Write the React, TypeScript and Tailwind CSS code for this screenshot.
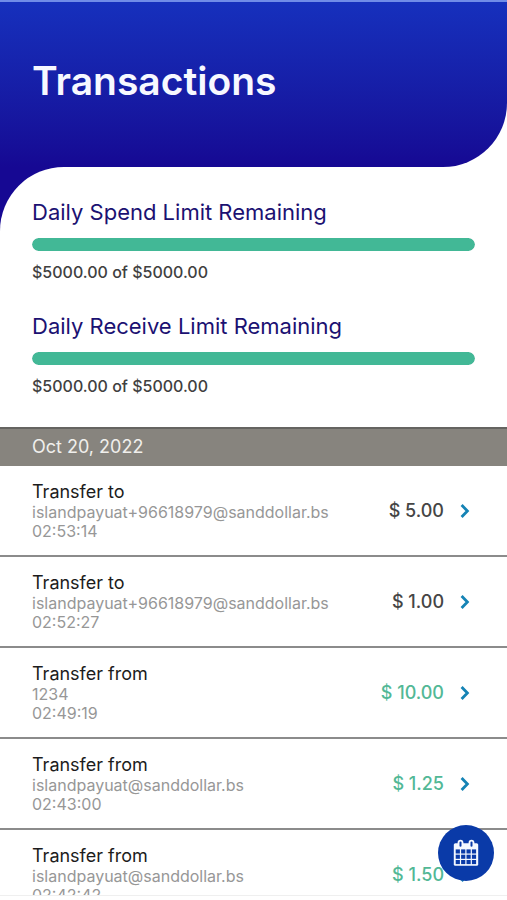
import React from 'react';

interface Transaction {
  label: string;
  account: string;
  time: string;
  amount: string;
  incoming: boolean;
}

const transactions: Transaction[] = [
  { label: 'Transfer to', account: 'islandpayuat+96618979@sanddollar.bs', time: '02:53:14', amount: '5.00', incoming: false },
  { label: 'Transfer to', account: 'islandpayuat+96618979@sanddollar.bs', time: '02:52:27', amount: '1.00', incoming: false },
  { label: 'Transfer from', account: '1234', time: '02:49:19', amount: '10.00', incoming: true },
  { label: 'Transfer from', account: 'islandpayuat@sanddollar.bs', time: '02:43:00', amount: '1.25', incoming: true },
  { label: 'Transfer from', account: 'islandpayuat@sanddollar.bs', time: '02:42:42', amount: '1.50', incoming: true },
];

const ChevronIcon: React.FC = () => (
  <svg viewBox="0 0 10 16" className="h-4 w-[10px] shrink-0" fill="none" aria-hidden="true">
    <path d="M1.6 2 7.4 8 1.6 14" stroke="#1583b5" strokeWidth="2.8" />
  </svg>
);

const CalendarIcon: React.FC = () => (
  <svg viewBox="0 0 26 28" className="h-7 w-[26px]" aria-hidden="true">
    <rect x="0.8" y="4.2" width="24.4" height="22.6" rx="1.6" fill="#f4f8ff" />
    <rect x="4.6" y="0.8" width="5.8" height="8.4" rx="2.9" fill="#f4f8ff" />
    <rect x="15.6" y="0.8" width="5.8" height="8.4" rx="2.9" fill="#f4f8ff" />
    <rect x="6.5" y="2.4" width="2" height="5.4" rx="1" fill="#0a3aa8" />
    <rect x="17.5" y="2.4" width="2" height="5.4" rx="1" fill="#0a3aa8" />
    {[10.4, 15.7, 21].map((y) =>
      [2.7, 8.1, 13.5, 18.9].map((x) => (
        <rect key={`${x}-${y}`} x={x} y={y} width="4.2" height="4.1" fill="#0a3aa8" />
      ))
    )}
  </svg>
);

const LimitBar: React.FC<{ id: string; title: string; left: number; total: number }> = ({ id, title, left, total }) => (
  <div>
    <h2 id={id} className="text-[22px] leading-7 text-[#1b1172]">{title}</h2>
    <div
      role="progressbar"
      aria-labelledby={id}
      aria-valuenow={left}
      aria-valuemax={total}
      className="mt-3 h-[13px] overflow-hidden rounded-full bg-gray-200"
    >
      <div className="h-full rounded-full bg-[#42b896]" style={{ width: `${(left / total) * 100}%` }} />
    </div>
    <p className="mt-[11px] text-base leading-5 font-medium text-[#404040]">
      ${left.toFixed(2)} of ${total.toFixed(2)}
    </p>
  </div>
);

const TransactionRow: React.FC<{ transaction: Transaction }> = ({ transaction }) => (
  <li className="border-b-2 border-[#8b8b8b]">
    <a href="#" className="flex items-center justify-between pt-[15px] pr-[37px] pb-[14px] pl-8">
      <div>
        <p className="text-lg leading-[22px] text-[#1c1c1c]">{transaction.label}</p>
        <p className="text-base leading-[19px] text-[#979797]">{transaction.account}</p>
        <p className="text-base leading-[19px] text-[#979797]">{transaction.time}</p>
      </div>
      <div className="flex items-center gap-4">
        <span className={`text-lg leading-6 font-medium ${transaction.incoming ? 'text-[#52b896]' : 'text-[#454545]'}`}>
          $ {transaction.amount}
        </span>
        <ChevronIcon />
      </div>
    </a>
  </li>
);

const App: React.FC = () => {
  return (
    <div className="flex h-screen flex-col overflow-hidden bg-white font-[Inter,'Liberation_Sans',sans-serif]">
      <header className="shrink-0 bg-white">
        <div className="rounded-br-[64px] border-t-2 border-[#708ce8] bg-linear-to-b from-[#1630bd] to-[#160893] px-8 pt-[55px] pb-[62px]">
          <h1 className="text-[39px] leading-12 font-semibold text-[#f7f8ff]">Transactions</h1>
        </div>
      </header>

      <main className="flex min-h-0 flex-1 flex-col">
        {/* Daily limits */}
        <div className="shrink-0 bg-[#160893]">
          <section className="flex flex-col gap-[30px] rounded-tl-[64px] bg-white px-8 pt-[31px] pb-[31px]">
            <LimitBar id="spend-limit" title="Daily Spend Limit Remaining" left={5000} total={5000} />
            <LimitBar id="receive-limit" title="Daily Receive Limit Remaining" left={5000} total={5000} />
          </section>
        </div>

        {/* Transactions of the day */}
        <section className="min-h-0 flex-1 overflow-hidden">
          <h3 className="border-t-2 border-[#656461] bg-[#87847e] px-8 pt-[6px] pb-[7px] text-lg leading-6 text-[#f0efec]">Oct 20, 2022</h3>
          <ul>
            {transactions.map((transaction) => (
              <TransactionRow key={transaction.time} transaction={transaction} />
            ))}
          </ul>
        </section>
      </main>

      <div className="h-[5px] shrink-0 border-t border-[#efefef] bg-white" />

      <button
        type="button"
        aria-label="Choose dates"
        className="fixed right-[13px] bottom-[19px] flex h-14 w-14 items-center justify-center rounded-full bg-[#0a3aa8]"
      >
        <CalendarIcon />
      </button>
    </div>
  );
};

export default App;
